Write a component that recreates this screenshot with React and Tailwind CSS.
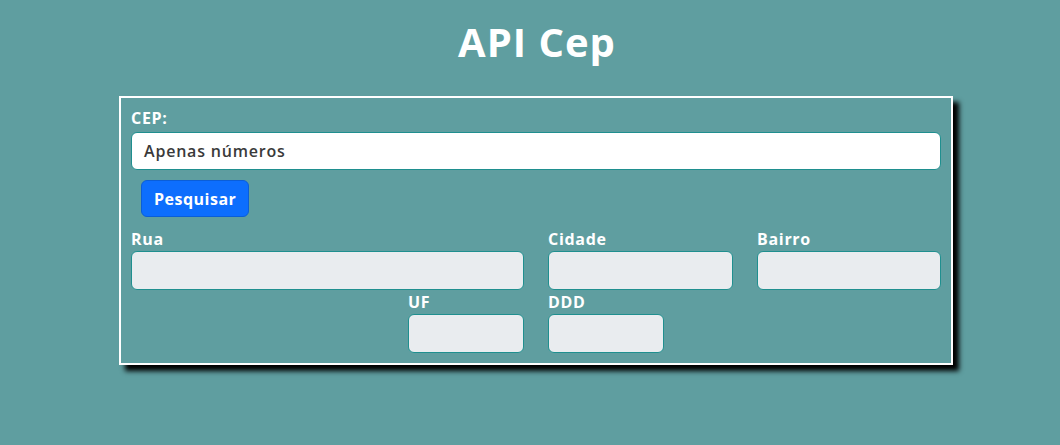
export default function App() {
  const font = { fontFamily: '"Open Sans", "Noto Sans", sans-serif' };
  const inputCls =
    "block w-full h-[38px] rounded-[6px] border border-[#1f8f8f] bg-[#e9ecef]";
  const labelCls =
    "block text-[16px] leading-[24px] font-bold tracking-[0.7px] text-white";
  return (
    <div className="min-h-[445px] w-[1060px] bg-[#5f9ea0]" style={font}>
      <h1 className="pt-[18px] text-center text-[40px] leading-[48px] font-bold tracking-[1px] text-white pl-[14px]">
        API Cep
      </h1>
      <div className="ml-[119px] mt-[30px] w-[834px] border-2 border-white px-[10px] pt-[8px] pb-[10px] shadow-[6px_6px_5px_#000]">
        <label className={labelCls + " mb-[2px]"}>CEP:</label>
        <div className="flex h-[38px] w-full items-center rounded-[6px] border border-[#1f8f8f] bg-white px-[12px] text-[16px] font-semibold tracking-[0.8px] text-[#3a3a3a]">
          Apenas números
        </div>
        <button className="ml-[10px] mt-[10px] h-[37px] rounded-[6px] border border-[#0b5ed7] bg-[#0d6efd] px-[12px] text-[16px] font-bold tracking-[0.5px] text-white">
          Pesquisar
        </button>
        <div className="mt-[10px] grid grid-cols-[393px_185px_184px] gap-x-[24px]">
          <div>
            <label className={labelCls}>Rua</label>
            <div className={inputCls + " !h-[39px]"}></div>
          </div>
          <div>
            <label className={labelCls}>Cidade</label>
            <div className={inputCls + " !h-[39px]"}></div>
          </div>
          <div>
            <label className={labelCls}>Bairro</label>
            <div className={inputCls + " !h-[39px]"}></div>
          </div>
        </div>
        <div className="flex justify-center gap-x-[24px]">
          <div className="w-[116px]">
            <label className={labelCls}>UF</label>
            <div className={inputCls + " !h-[39px]"}></div>
          </div>
          <div className="w-[116px]">
            <label className={labelCls}>DDD</label>
            <div className={inputCls + " !h-[39px]"}></div>
          </div>
        </div>
      </div>
    </div>
  );
}
